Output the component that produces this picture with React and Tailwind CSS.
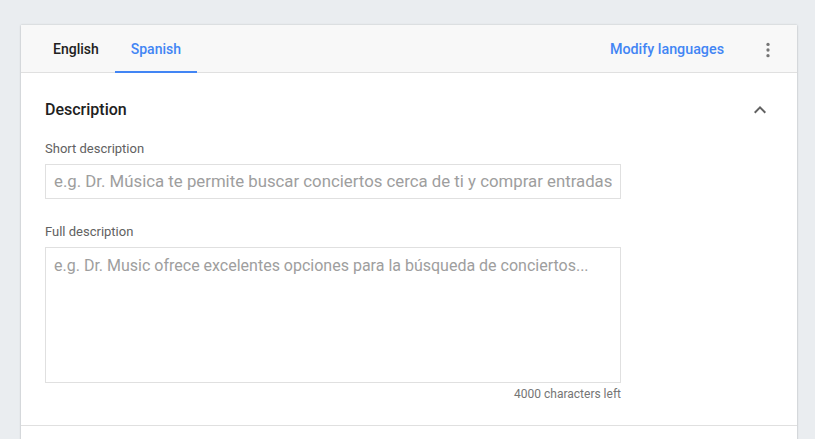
import { useState } from 'react';

function App() {
  const [tab, setTab] = useState('Spanish');

  return (
    <div className="min-h-screen bg-[#eaedf0] pl-[21px] pr-[18px] pt-[25px] font-['Roboto',sans-serif]">
      <div className="bg-white shadow-[0_0_2px_rgba(0,0,0,0.18),0_1px_2px_rgba(0,0,0,0.1)]">
        {/* Header with language tabs */}
        <div className="flex items-center h-[48px] bg-[#f8f8f8] border-b border-[#e0e0e0] pl-[16px] pr-[20px]">
          {['English', 'Spanish'].map((t) => (
            <button
              key={t}
              onClick={() => setTab(t)}
              className={`relative h-full px-[16px] text-[14px] font-medium ${
                tab === t ? 'text-[#4285f4]' : 'text-[#212121]'
              }`}
            >
              <span className="relative top-[1px]">{t}</span>
              {tab === t && (
                <span className="absolute left-0 right-0 -bottom-[1px] h-[2px] bg-[#4285f4]" />
              )}
            </button>
          ))}
          <div className="flex-1" />
          <button className="relative top-[1px] text-[14.3px] font-medium text-[#4285f4] mr-[35px]">Modify languages</button>
          <svg width="18" height="18" viewBox="0 0 24 24" fill="#757575" className="relative top-[1px]">
            <circle cx="12" cy="4.5" r="2.2" />
            <circle cx="12" cy="12" r="2.2" />
            <circle cx="12" cy="19.5" r="2.2" />
          </svg>
        </div>

        {/* Description section */}
        <div className="px-[24px] pt-[25px] pb-[22px] border-b border-[#e0e0e0]">
          <div className="flex items-center justify-between pr-[1px]">
            <h2 className="text-[16px] font-medium text-[#212121]">Description</h2>
            <svg width="24" height="24" viewBox="0 0 24 24" fill="#616161">
              <path d="M7.41 15.41L12 10.83l4.59 4.58L18 14l-6-6-6 6z" />
            </svg>
          </div>

          <div className="w-[576px]">
            <label className="block mt-[17px] text-[13px] text-[#616161]">Short description</label>
            <input
              type="text"
              placeholder="e.g. Dr. Música te permite buscar conciertos cerca de ti y comprar entradas"
              className="mt-[5px] w-full h-[35px] px-[8px] border border-[#e0e0e0] text-[16.8px] placeholder:text-[#9e9e9e] outline-none"
            />

            <label className="block mt-[23px] text-[13px] text-[#616161]">Full description</label>
            <textarea
              placeholder="e.g. Dr. Music ofrece excelentes opciones para la búsqueda de conciertos..."
              className="mt-[6px] block w-full h-[136px] px-[8px] py-[6px] border border-[#e0e0e0] text-[16px] placeholder:text-[#9e9e9e] outline-none resize-none"
            />
            <div className="mt-[2px] text-right text-[12px] text-[#757575]">4000 characters left</div>
          </div>
        </div>
        <div className="h-[20px]" />
      </div>
    </div>
  );
}

export default App;
